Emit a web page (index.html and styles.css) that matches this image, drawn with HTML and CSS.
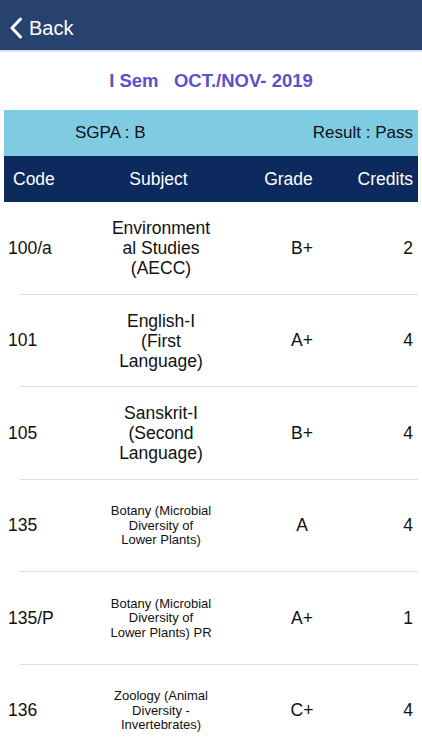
FILE: index.html
```html
<!DOCTYPE html>
<html>
<head>
<meta charset="utf-8">
<link rel="stylesheet" href="styles.css">
</head>
<body>
<header class="nav">
  <div class="back">
    <svg class="chev" width="14" height="22" viewBox="0 0 14 22"><path d="M11.5 2 L3 11 L11.5 20" fill="none" stroke="#fff" stroke-width="3" stroke-linecap="round" stroke-linejoin="round"/></svg>
    <span class="back-text">Back</span>
  </div>
</header>
<h1 class="title">I Sem&nbsp;&nbsp;&nbsp;OCT./NOV- 2019</h1>
<section class="table">
  <div class="summary">
    <span class="sgpa">SGPA : B</span>
    <span class="result">Result : Pass</span>
  </div>
  <div class="head">
    <span class="h-code">Code</span>
    <span class="h-subj">Subject</span>
    <span class="h-grade">Grade</span>
    <span class="h-cred">Credits</span>
  </div>
  <div class="row">
    <span class="code">100/a</span>
    <span class="subj">Environment<br>al Studies<br>(AECC)</span>
    <span class="grade">B+</span>
    <span class="cred">2</span>
  </div>
  <div class="row">
    <span class="code">101</span>
    <span class="subj">English-I<br>(First<br>Language)</span>
    <span class="grade">A+</span>
    <span class="cred">4</span>
  </div>
  <div class="row">
    <span class="code">105</span>
    <span class="subj">Sanskrit-I<br>(Second<br>Language)</span>
    <span class="grade">B+</span>
    <span class="cred">4</span>
  </div>
  <div class="row">
    <span class="code">135</span>
    <span class="subj small">Botany (Microbial<br>Diversity of<br>Lower Plants)</span>
    <span class="grade">A</span>
    <span class="cred">4</span>
  </div>
  <div class="row">
    <span class="code">135/P</span>
    <span class="subj small">Botany (Microbial<br>Diversity of<br>Lower Plants) PR</span>
    <span class="grade">A+</span>
    <span class="cred">1</span>
  </div>
  <div class="row">
    <span class="code">136</span>
    <span class="subj small">Zoology (Animal<br>Diversity -<br>Invertebrates)</span>
    <span class="grade">C+</span>
    <span class="cred">4</span>
  </div>
</section>
</body>
</html>
```
FILE: styles.css
```css
html, body {
  margin: 0;
  padding: 0;
  background: #ffffff;
  font-family: "Liberation Sans", Arial, sans-serif;
  color: #111111;
  overflow: hidden;
}
.nav {
  height: 50px;
  background: #284270;
  border-bottom: 2px solid #d6e4f2;
  display: flex;
  align-items: center;
}
.back {
  display: flex;
  align-items: center;
  padding-left: 9px;
  padding-top: 6px;
  gap: 6px;
}
.chev {
  display: block;
}
.back-text {
  color: #ffffff;
  font-size: 20px;
}
.title {
  margin: 0;
  height: 58px;
  display: flex;
  align-items: center;
  justify-content: center;
  font-size: 18.5px;
  font-weight: bold;
  color: #5b50c8;
}
.table {
  margin: 0 4px;
}
.summary {
  height: 46px;
  background: #7ecbe2;
  display: grid;
  grid-template-columns: 1fr 1fr;
  align-items: center;
  font-size: 17px;
  color: #111;
}
.sgpa {
  padding-left: 71px;
}
.result {
  text-align: right;
  padding-right: 5px;
}
.head {
  height: 46px;
  background: #0c2a5e;
  color: #ffffff;
  font-size: 17.5px;
  display: grid;
  grid-template-columns: 100px 109px 140px 1fr;
  align-items: center;
}
.h-code { padding-left: 9px; }
.h-subj { text-align: center; }
.h-grade { text-align: center; padding-left: 11px; }
.h-cred { text-align: right; padding-right: 5px; }
.row {
  box-sizing: border-box;
  height: 92.5px;
  display: grid;
  grid-template-columns: 104px 106px 176px 1fr;
  align-items: center;
  font-size: 17.5px;
  position: relative;
}
.row::after {
  content: "";
  position: absolute;
  left: 16px;
  right: 0;
  bottom: 0;
  height: 1px;
  background: #dddddd;
}
.code { padding-left: 4px; }
.subj {
  text-align: center;
  line-height: 20px;
  white-space: nowrap;
}
.subj.small {
  font-size: 13px;
  line-height: 14.5px;
}
.grade { text-align: center; }
.cred { text-align: right; padding-right: 5px; }
```
